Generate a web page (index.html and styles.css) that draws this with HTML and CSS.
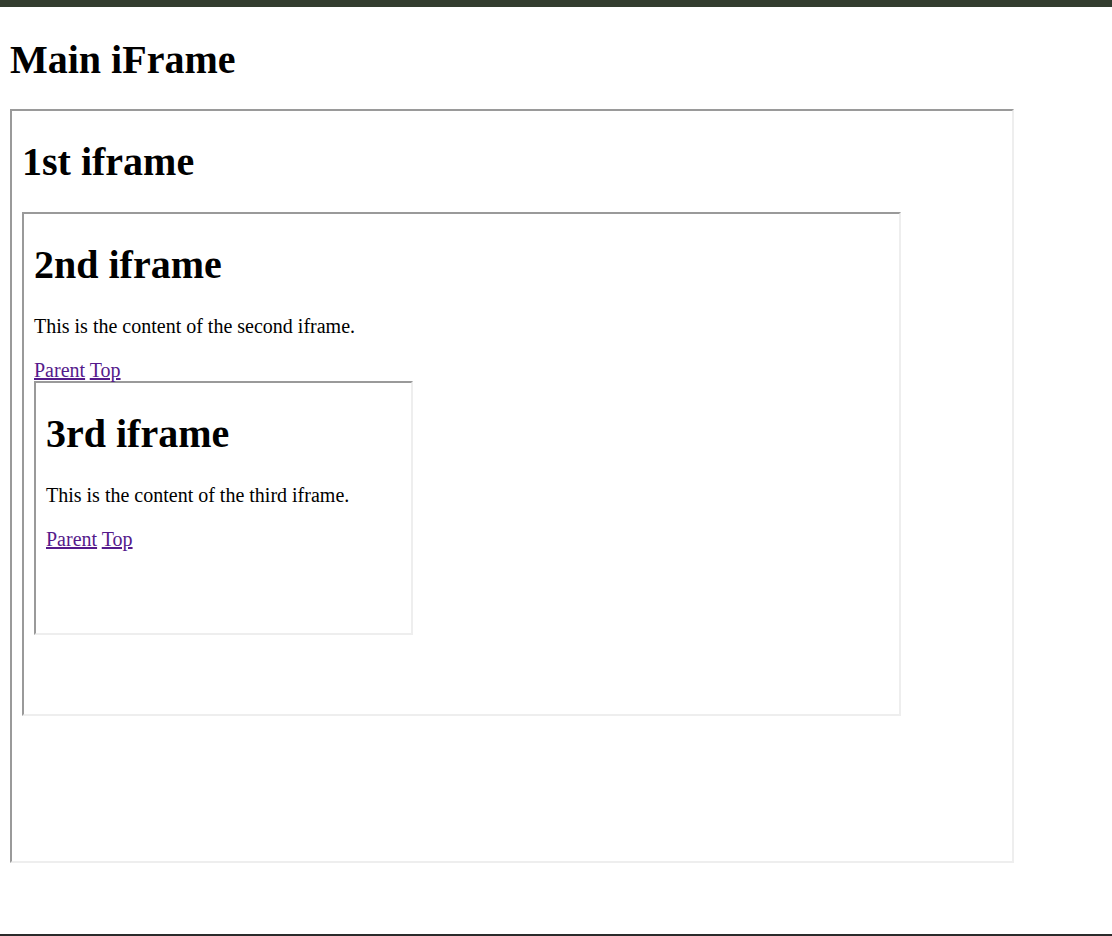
FILE: index.html
```html
<!DOCTYPE html>
<html lang="en">
<head>
<meta charset="utf-8">
<title>Main iFrame</title>
<link rel="stylesheet" href="styles.css">
</head>
<body>
<div class="topbar"></div>
<main class="page">
  <h1 class="title">Main iFrame</h1>
  <div class="frame frame-1">
    <h1 class="title">1st iframe</h1>
    <div class="frame frame-2">
      <h1 class="title">2nd iframe</h1>
      <p class="text">This is the content of the second iframe.</p>
      <div class="links"><a href="#" class="link">Parent</a> <a href="#" class="link">Top</a></div>
      <div class="frame frame-3">
        <h1 class="title">3rd iframe</h1>
        <p class="text">This is the content of the third iframe.</p>
        <div class="links"><a href="#" class="link">Parent</a> <a href="#" class="link">Top</a></div>
      </div>
    </div>
  </div>
</main>
<div class="bottom-edge"></div>
</body>
</html>
```

FILE: styles.css
```css
html, body {
  margin: 0;
  padding: 0;
  background: #ffffff;
}

body {
  font-family: "Liberation Serif", "Times New Roman", serif;
  font-size: 20px;
  color: #000000;
}

.topbar {
  height: 7px;
  background: #333d2f;
}

.page {
  padding: 0 10px;
  display: flow-root;
}

.title {
  font-size: 40px;
  font-weight: bold;
  margin: 28px 0 26px;
  padding-top: 2px;
  line-height: 46px;
}

.frame-1 > .title,
.frame-2 > .title,
.frame-3 > .title {
  margin: 28px 0 27px;
  padding-top: 0;
}

.frame {
  display: flow-root;
  box-sizing: border-box;
  padding: 0 10px;
  border-style: solid;
  border-width: 2px;
  border-color: #9a9a9a #eeeeee #eeeeee #9a9a9a;
  overflow: hidden;
  background: #ffffff;
}

.frame-1 {
  width: 1004px;
  height: 754px;
}

.frame-2 {
  width: 879px;
  height: 504px;
}

.frame-3 {
  width: 379px;
  height: 254px;
}

.text {
  margin: 20px 0 21px;
  line-height: 23px;
}

.links {
  line-height: 22px;
}

.link {
  color: #551a8b;
  text-decoration: underline;
}

.bottom-edge {
  position: fixed;
  left: 0;
  right: 0;
  bottom: 0;
  height: 2px;
  background: #2b2b2b;
}
```
